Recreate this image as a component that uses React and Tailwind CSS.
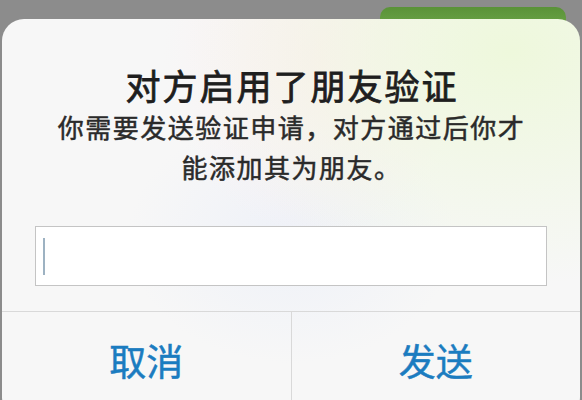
import React from 'react';

const font = { fontFamily: '"Noto Sans CJK SC", "Noto Sans", sans-serif' };

export default function App() {
  return (
    <div
      className="relative w-[582px] h-[400px] overflow-hidden bg-[#8c8c8c]"
      style={font}
    >
      {/* green button peeking behind the alert */}
      <div className="absolute left-[380px] top-[7px] w-[186px] h-[30px] rounded-t-[10px] bg-[linear-gradient(180deg,#5a9238,#73ad4f)]" />

      <div className="relative mx-[2px] mt-[19px] h-[400px] rounded-[22px] bg-[#f7f7f7] bg-[radial-gradient(ellipse_at_88%_8%,#eef8dc_0%,transparent_45%),radial-gradient(ellipse_at_55%_10%,#fbeff1_0%,transparent_35%),radial-gradient(ellipse_at_50%_55%,#eef1f8_0%,transparent_40%)] flex flex-col">
        <h1 className="mt-[44px] pl-[2px] text-center text-[35px] leading-[44px] font-normal tracking-[2px] text-[#1e1e1e] [-webkit-text-stroke:0.8px_#1e1e1e]">
          对方启用了朋友验证
        </h1>
        <p className="pl-[1px] text-center text-[26px] leading-[40px] font-normal tracking-[1.5px] text-[#2a2a2a] [-webkit-text-stroke:0.5px_#2a2a2a]">
          你需要发送验证申请，对方通过后你才
          <br />
          能添加其为朋友。
        </p>

        <div className="mt-[39px] ml-[33px] w-[512px] h-[60px] bg-white border border-[#c4c4c4] flex items-center pl-[7px]">
          <div className="w-[2px] h-[37px] bg-[#9db2c2]" />
        </div>

        <div className="mt-[25px] h-px bg-[#d9d9d9]" />

        <div className="flex h-[98px]">
          <button className="flex-1 flex items-center justify-center text-[37px] font-normal text-[#1b7cc0] [-webkit-text-stroke:0.5px_#1b7cc0]">
            取消
          </button>
          <div className="w-px bg-[#d9d9d9]" />
          <button className="flex-1 flex items-center justify-center text-[37px] font-normal text-[#1b7cc0] [-webkit-text-stroke:0.5px_#1b7cc0]">
            发送
          </button>
        </div>
      </div>
    </div>
  );
}
